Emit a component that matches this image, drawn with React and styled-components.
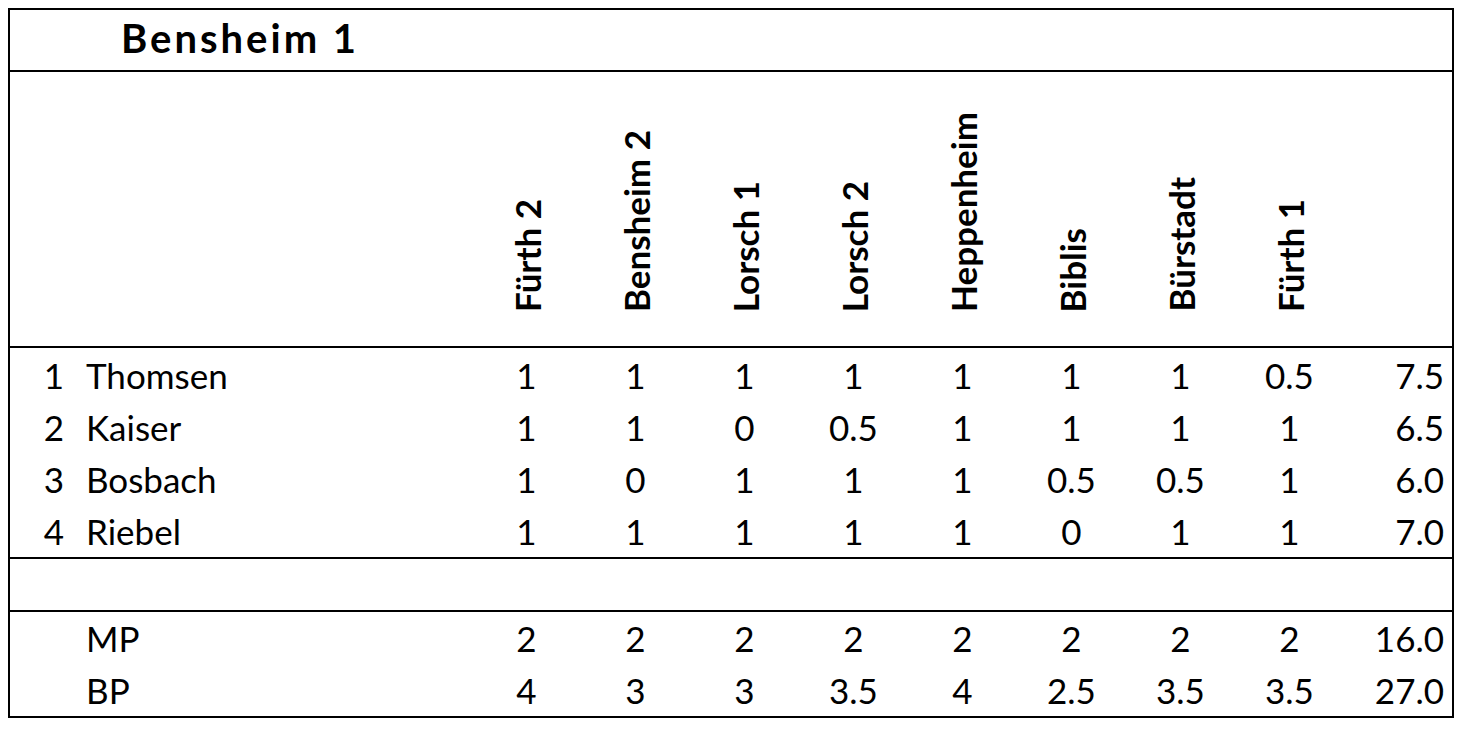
import React from 'react';
import styled, { createGlobalStyle } from 'styled-components';

const COLUMNS = '62px 400px repeat(8, 109px) 1fr';
const LINE = '#000';

const GlobalStyle = createGlobalStyle`
  body {
    margin: 8px;
    background: #fff;
    color: #000;
    font-family: Lato, "Open Sans", sans-serif;
  }
`;

const Sheet = styled.div`
  width: 1446px;
  box-sizing: border-box;
  border: 2px solid ${LINE};
  font-size: 35px;
`;

const TitleRow = styled.div`
  height: 60px;
  border-bottom: 2px solid ${LINE};
  padding-left: 111px;
  font-weight: 700;
  font-size: 40px;
  letter-spacing: 3px;
  line-height: 56px;
`;

const HeaderRow = styled.div`
  display: grid;
  grid-template-columns: ${COLUMNS};
  height: 274px;
  border-bottom: 2px solid ${LINE};
`;

const HeaderCell = styled.div`
  display: flex;
  align-items: flex-end;
  justify-content: center;
  padding-bottom: 34px;
`;

const RotatedLabel = styled.span`
  writing-mode: vertical-rl;
  transform: rotate(180deg);
  font-weight: 700;
  font-size: 35px;
  line-height: 40px;
  white-space: nowrap;
`;

const Group = styled.div`
  padding-top: ${props => props.top || 0}px;
  border-bottom: ${props => (props.last ? 'none' : `2px solid ${LINE}`)};
  min-height: ${props => props.minHeight || 0}px;
`;

const Row = styled.div`
  display: grid;
  grid-template-columns: ${COLUMNS};
  height: 52px;
  line-height: 52px;
`;

const Rank = styled.div`
  text-align: right;
  padding-right: 8px;
`;

const Name = styled.div`
  padding-left: 14px;
`;

const Value = styled.div`
  text-align: center;
`;

const Total = styled.div`
  text-align: right;
  padding-right: 8px;
`;

const opponents = ['Fürth 2', 'Bensheim 2', 'Lorsch 1', 'Lorsch 2', 'Heppenheim', 'Biblis', 'Bürstadt', 'Fürth 1'];

const players = [
  { rank: 1, name: 'Thomsen', scores: ['1', '1', '1', '1', '1', '1', '1', '0.5'], total: '7.5' },
  { rank: 2, name: 'Kaiser', scores: ['1', '1', '0', '0.5', '1', '1', '1', '1'], total: '6.5' },
  { rank: 3, name: 'Bosbach', scores: ['1', '0', '1', '1', '1', '0.5', '0.5', '1'], total: '6.0' },
  { rank: 4, name: 'Riebel', scores: ['1', '1', '1', '1', '1', '0', '1', '1'], total: '7.0' },
];

const summary = [
  { name: 'MP', scores: ['2', '2', '2', '2', '2', '2', '2', '2'], total: '16.0' },
  { name: 'BP', scores: ['4', '3', '3', '3.5', '4', '2.5', '3.5', '3.5'], total: '27.0' },
];

const ScoreRow = ({ rank, name, scores, total }) => (
  <Row>
    <Rank>{rank}</Rank>
    <Name>{name}</Name>
    {scores.map((s, i) => (
      <Value key={i}>{s}</Value>
    ))}
    <Total>{total}</Total>
  </Row>
);

export default function App() {
  return (
    <>
      <GlobalStyle />
      <Sheet>
        <TitleRow>Bensheim 1</TitleRow>
        <HeaderRow>
          <div />
          <div />
          {opponents.map(team => (
            <HeaderCell key={team}>
              <RotatedLabel>{team}</RotatedLabel>
            </HeaderCell>
          ))}
          <div />
        </HeaderRow>
        <Group top={1}>
          {players.map(p => (
            <ScoreRow key={p.rank} {...p} />
          ))}
        </Group>
        <Group minHeight={51} />
        <Group last>
          {summary.map(s => (
            <ScoreRow key={s.name} rank="" {...s} />
          ))}
        </Group>
      </Sheet>
    </>
  );
}
